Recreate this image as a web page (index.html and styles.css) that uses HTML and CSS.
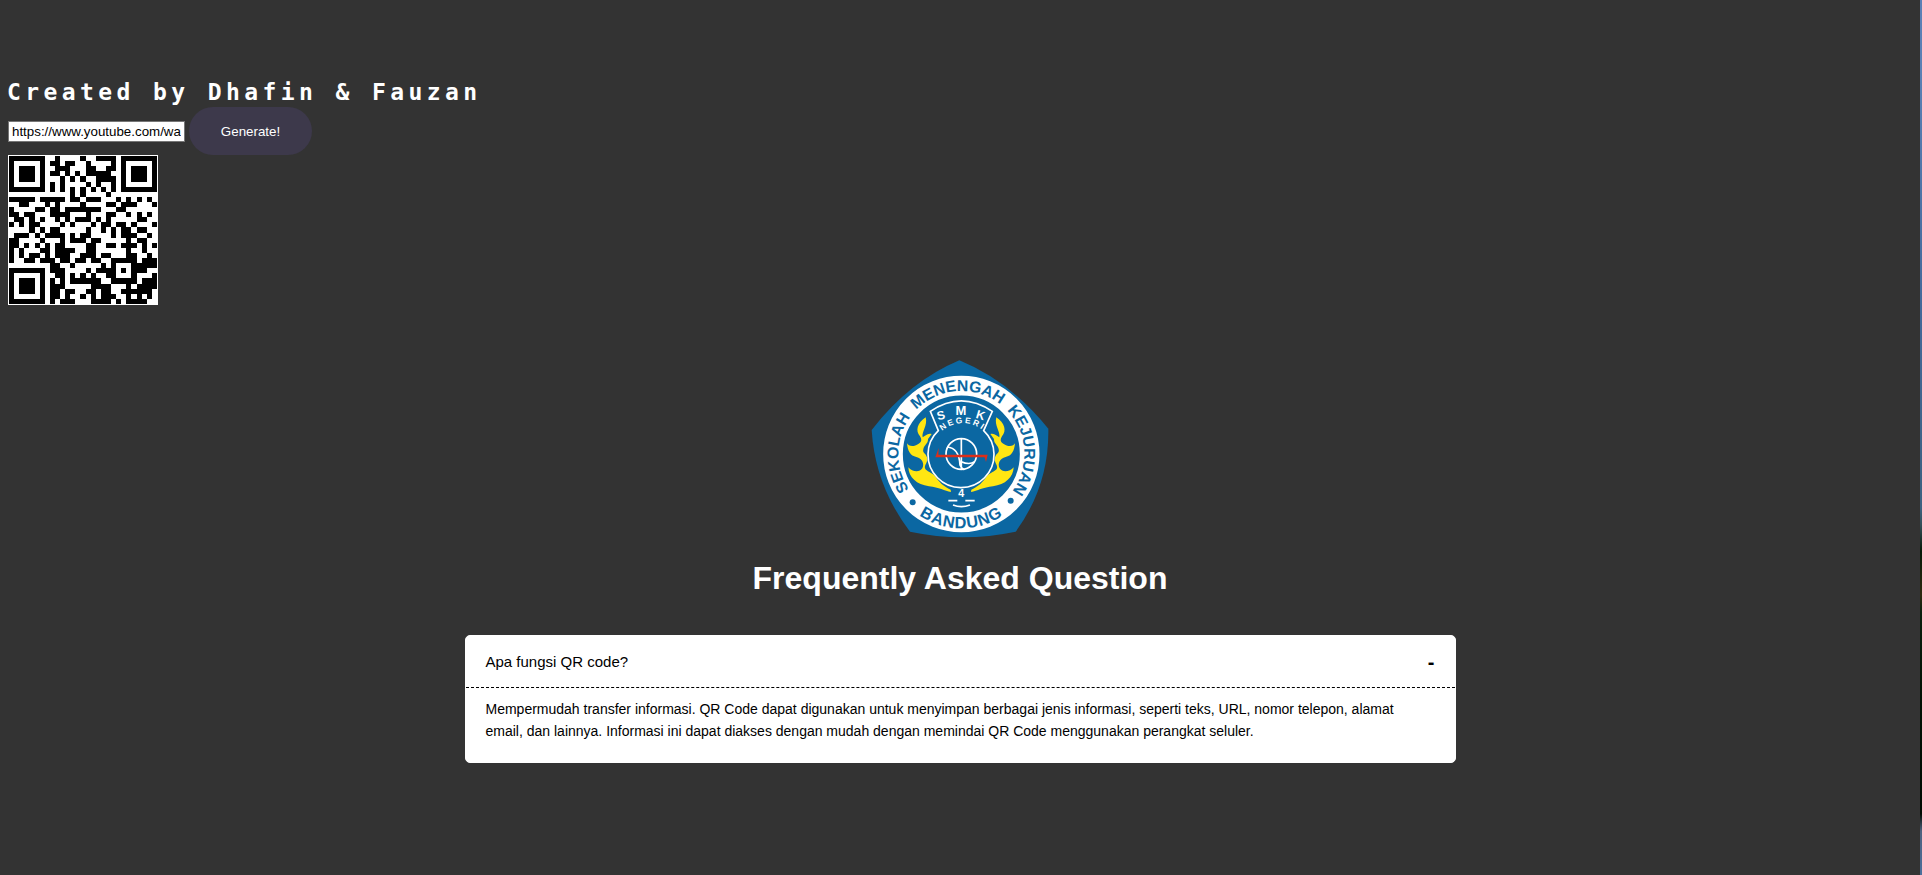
FILE: index.html
```html
<!DOCTYPE html>
<html lang="id">
<head>
<meta charset="utf-8">
<title>QR Code Generator</title>
<link rel="stylesheet" href="styles.css">
</head>
<body>
<main class="page">
  <section class="generator">
    <h1 class="credit">Created by Dhafin &amp; Fauzan</h1>
    <form class="form">
      <input class="url" type="text" id="url" value="https://www.youtube.com/watch?v=Xa24016aaaa">
      <button class="generate" type="button">Generate!</button>
    </form>
    <svg class="qr" id="qr" viewBox="0 0 29 29" shape-rendering="crispEdges"></svg>
  </section>
  <section class="faq">
    <svg class="logo" viewBox="0 0 600 600">
      <defs>
        <path id="ringTop" d="M170.700 446A189 189 0 1 1 437.300 446"/>
        <path id="ringBottom" d="M140 463A223 223 0 0 0 468 463"/>
        <path id="negeri" d="M243 245A96 96 0 0 1 369 241"/>
        <path id="flame" d="M197 202C172 218 165 243 180 259C186 269 185 277 176 281C160 293 145 288 141 280C143 303 151 318 169 321C187 326 194 341 187 355C178 369 156 365 145 352C146 382 170 404 207 409C237 412 254 423 273 426L272 419C252 410 235 394 227 380C216 367 199 365 195 355C192 344 206 336 201 322C196 307 187 310 190 297C193 284 205 281 204 267L215 252C203 248 195 258 188 262C184 246 204 226 197 202Z"/>
      </defs>
      <path fill="#0b67a2" d="M298 31Q448 92 565 236Q568 407 467 545Q308 578 150 545Q45 407 35 240Q148 94 298 31Z"/>
      <circle cx="304" cy="312" r="205" fill="none" stroke="#fff" stroke-width="59"/>
      <g fill="#0b67a2" class="ring-text">
        <circle cx="158" cy="457" r="9"/><circle cx="452" cy="452" r="9"/>
        <text font-size="47"><textPath href="#ringTop" startOffset="36" textLength="826" lengthAdjust="spacingAndGlyphs">SEKOLAH&#160;&#160;MENENGAH&#160;&#160;KEJURUAN</textPath></text>
        <text font-size="49"><textPath href="#ringBottom" startOffset="50" textLength="266">BANDUNG</textPath></text>
      </g>
      <g fill="#ffe612">
        <use href="#flame"/>
        <use href="#flame" transform="matrix(-1 0 0 1 606 0)"/>
      </g>
      <g fill="none" stroke="#fff" stroke-width="5">
        <path d="M235 242L211 184Q304 121 397 184L371 242A99 99 0 1 1 235 242Z"/>
        <circle cx="304" cy="312" r="46"/>
        <path d="M304 266V360M261 291Q297 293 300 345Q303 355 313 359M304 335Q328 346 344 335"/>
        <path d="M265 452H292M316 452H344M279 465Q304 475 330 465"/>
      </g>
      <path fill="#dc2f1a" d="M236 294L226 322H374L378 336L383 314H235Z"/>
      <g fill="#fff" class="ring-text" text-anchor="middle">
        <text font-size="36" transform="translate(246 208) rotate(-14)">S</text>
        <text font-size="39" x="303" y="195">M</text>
        <text font-size="36" transform="translate(358 207) rotate(17)">K</text>
        <text font-size="32" x="304" y="442">4</text>
      </g>
      <text font-size="25" fill="#fff" class="ring-text"><textPath href="#negeri" startOffset="4" textLength="128">NEGERI</textPath></text>
    </svg>
    <h2 class="faq-title">Frequently Asked Question</h2>
    <article class="card">
      <header class="question"><span>Apa fungsi QR code?</span><span class="toggle">-</span></header>
      <p class="answer">Mempermudah transfer informasi. QR Code dapat digunakan untuk menyimpan berbagai jenis informasi, seperti teks, URL, nomor telepon, alamat email, dan lainnya. Informasi ini dapat diakses dengan mudah dengan memindai QR Code menggunakan perangkat seluler.</p>
    </article>
  </section>
</main>
<div class="edge"></div>
<script src="qr.js"></script>
</body>
</html>
```
FILE: styles.css
```css
* { box-sizing: border-box; }
body {
  margin: 0;
  height: 875px;
  display: flex;
  overflow: hidden;
  background: #333;
  font-family: "Liberation Sans", Arial, sans-serif;
}
.page { width: 1920px; }
.edge {
  width: 2px;
  background: linear-gradient(#5a7fb5 0, #5a80b4 8%, #44699a 35%, #3d6180 58%, #334f58 60%, #061a08 63%, #2e2a10 68%, #0a200e 70%, #021204 80%, #010c03 93%, #4d617e 95%, #4b6f9b 100%);
}
.generator { padding: 76px 8px 0; height: 305px; }
.credit {
  margin: 0 0 0 -1px;
  height: 31px;
  line-height: 33px;
  color: #fff;
  font-family: "DejaVu Sans Mono", monospace;
  font-size: 23px;
  letter-spacing: 4.4px;
}
.form { display: flex; align-items: center; gap: 4px; height: 48px; }
.url {
  width: 177px;
  height: 21px;
  padding: 2px 3px;
  border: 1px solid #767676;
  background: #fff;
  color: #000;
  font: 13.333px "Liberation Sans", Arial, sans-serif;
}
.generate {
  width: 123px;
  height: 48px;
  padding: 0;
  border: 0;
  border-radius: 24px;
  background: #3d394b;
  color: #fff;
  font: 13.333px "Liberation Sans", Arial, sans-serif;
}
.qr {
  display: block;
  width: 150px;
  height: 150px;
  padding: 1px;
  background: #fff;
}
.faq {
  display: flex;
  flex-direction: column;
  align-items: center;
  padding-top: 45px;
}
.logo { width: 200px; height: 200px; }
.ring-text { font-family: "Liberation Sans", Arial, sans-serif; font-weight: bold; }
.faq-title {
  margin: 8px 0 37px;
  height: 40px;
  line-height: 40px;
  color: #fff;
  font-size: 32px;
}
.card {
  width: 991px;
  height: 128px;
  border: 1px solid #fff;
  border-radius: 5px;
  background: #fff;
  color: #000;
}
.question {
  display: flex;
  justify-content: space-between;
  height: 52px;
  padding: 0 20px;
  border-bottom: 1px dashed #000;
  font-size: 15px;
  line-height: 52px;
}
.toggle { font-size: 20px; font-weight: bold; }
.answer { margin: 0; padding: 10px 20px; font-size: 14px; line-height: 22px; }
```
FILE: qr.js
```js
// Version 3 QR symbol, error correction level L, mask 2.
const SIZE = 29, DATA = 55, ECC = 15;

function encode(text) {
  const bits = [];
  const push = (v, n) => { for (let i = n - 1; i >= 0; i--) bits.push((v >> i) & 1); };
  push(4, 4);
  push(text.length, 8);
  for (const ch of text) push(ch.charCodeAt(0), 8);
  push(0, 4);
  const bytes = [];
  for (let i = 0; i < bits.length; i += 8) bytes.push(parseInt(bits.slice(i, i + 8).join(''), 2));
  for (let p = 0xec; bytes.length < DATA; p ^= 0xfd) bytes.push(p);
  return bytes;
}

function mul(a, b) {
  let r = 0;
  for (; b; b >>= 1) {
    if (b & 1) r ^= a;
    a = (a << 1) ^ (a & 128 ? 0x11d : 0);
  }
  return r;
}

function parity(data) {
  let gen = [1], root = 1;
  for (let i = 0; i < ECC; i++) {
    const next = gen.concat(0);
    gen.forEach((g, j) => { next[j + 1] ^= mul(g, root); });
    gen = next;
    root = mul(root, 2);
  }
  const rem = data.concat(Array(ECC).fill(0));
  for (let i = 0; i < data.length; i++) {
    const f = rem[i];
    gen.forEach((g, j) => { rem[i + j] ^= mul(g, f); });
  }
  return rem.slice(data.length);
}

function matrix(text) {
  const m = Array.from({ length: SIZE }, () => Array(SIZE).fill(null));
  const square = (cy, cx, radius, light) => {
    for (let y = -radius; y <= radius; y++) for (let x = -radius; x <= radius; x++) {
      const row = m[cy + y];
      if (row && row[cx + x] !== undefined) row[cx + x] = light.includes(Math.max(Math.abs(x), Math.abs(y))) ? 0 : 1;
    }
  };
  for (let i = 0; i < SIZE; i++) m[6][i] = m[i][6] = 1 - i % 2;
  square(3, 3, 4, [2, 4]);
  square(3, 25, 4, [2, 4]);
  square(25, 3, 4, [2, 4]);
  square(22, 22, 2, [1]);
  const format = '111110110101010';
  const first = [[8,0],[8,1],[8,2],[8,3],[8,4],[8,5],[8,7],[8,8],[7,8],[5,8],[4,8],[3,8],[2,8],[1,8],[0,8]];
  first.forEach(([y, x], i) => { m[y][x] = +format[i]; });
  for (let i = 0; i < 7; i++) m[28 - i][8] = +format[i];
  for (let i = 7; i < 15; i++) m[8][14 + i] = +format[i];
  m[21][8] = 1;
  const data = encode(text);
  const stream = data.concat(parity(data));
  let k = 0, up = true;
  for (let right = 28; right > 0; right -= 2, up = !up) {
    if (right === 6) right = 5;
    for (let i = 0; i < SIZE; i++) {
      const y = up ? SIZE - 1 - i : i;
      for (const x of [right, right - 1]) {
        if (m[y][x] !== null) continue;
        const bit = k < stream.length * 8 ? (stream[k >> 3] >> (7 - k % 8)) & 1 : 0;
        k++;
        m[y][x] = bit ^ (x % 3 === 0 ? 1 : 0);
      }
    }
  }
  return m;
}

let d = '';
matrix(document.getElementById('url').value).forEach((row, y) => row.forEach((on, x) => {
  if (on) d += `M${x} ${y}h1v1h-1z`;
}));
document.getElementById('qr').innerHTML = `<path d="${d}"/>`;
```
